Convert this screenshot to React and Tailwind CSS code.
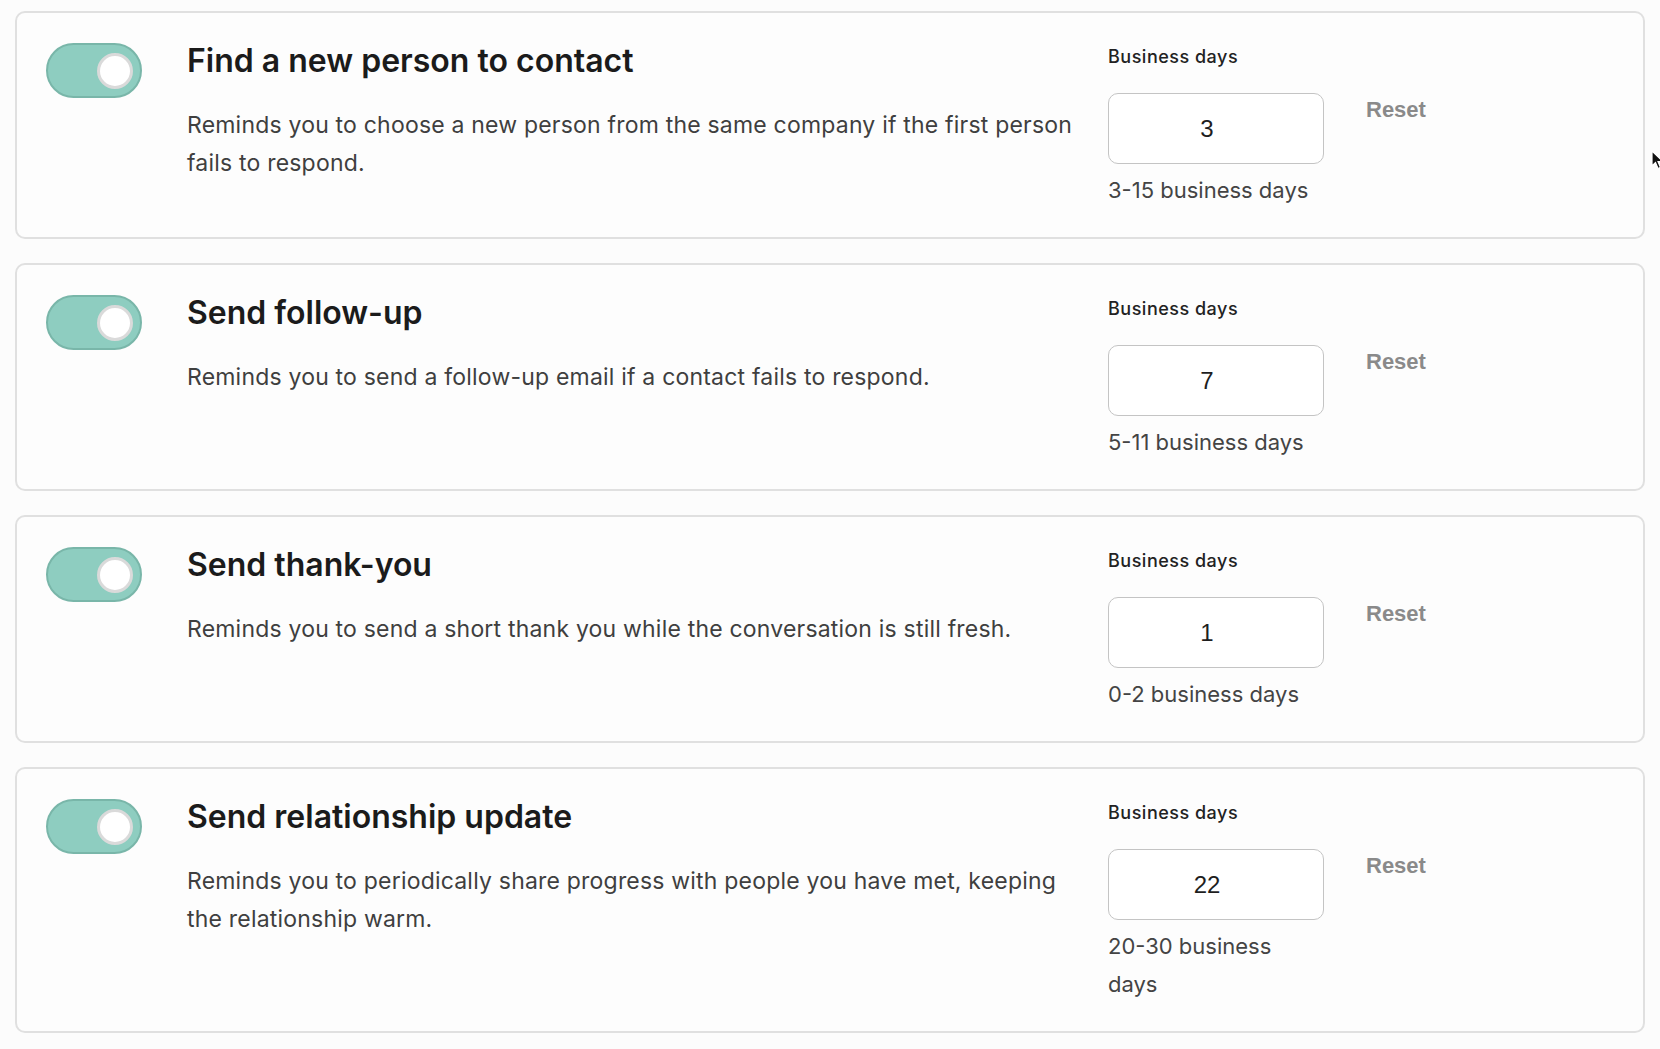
import React from 'react';

const reminders = [
  {
    title: 'Find a new person to contact',
    desc: 'Reminds you to choose a new person from the same company if the first person fails to respond.',
    value: '3',
    range: '3-15 business days',
  },
  {
    title: 'Send follow-up',
    desc: 'Reminds you to send a follow-up email if a contact fails to respond.',
    value: '7',
    range: '5-11 business days',
  },
  {
    title: 'Send thank-you',
    desc: 'Reminds you to send a short thank you while the conversation is still fresh.',
    value: '1',
    range: '0-2 business days',
  },
  {
    title: 'Send relationship update',
    desc: 'Reminds you to periodically share progress with people you have met, keeping the relationship warm.',
    value: '22',
    range: '20-30 business days',
  },
];

function Toggle() {
  return (
    <div className="mt-[2px] w-[96px] h-[55px] shrink-0 rounded-full bg-[#8ecdc0] border-2 border-[#79b6a9] flex items-center justify-end pr-[7px]">
      <div className="w-[36px] h-[36px] rounded-full bg-white border-[3px] border-[#dadada]" />
    </div>
  );
}

function ReminderCard({ item }) {
  return (
    <div className="flex items-start border-2 border-[#e0e0e0] rounded-[10px] bg-[#fdfdfd] pl-[29px] pt-[28px] pb-[28px]">
      <Toggle />
      {/* Title + description */}
      <div className="ml-[45px] w-[895px] shrink-0 font-['Inter',sans-serif]">
        <h2 className="text-[32px] leading-[40px] font-semibold text-[#1b1b1b]">{item.title}</h2>
        <p className="mt-[25px] text-[23px] leading-[38px] text-[#3f3f3f] tracking-[0.2px]">{item.desc}</p>
      </div>
      {/* Business days */}
      <div className="ml-[26px] w-[216px] shrink-0 font-['Inter',sans-serif]">
        <div className="mt-[5px] text-[18px] leading-[22px] font-medium text-[#222] tracking-[0.5px]">
          Business days
        </div>
        <div className="mt-[25px] h-[71px] rounded-[10px] border-[1.5px] border-[#c4c4c4] bg-white flex items-center justify-center pr-[18px] text-[24px] text-[#1e1e1e] font-['Liberation_Sans',sans-serif]">
          {item.value}
        </div>
        <div className="mt-[7px] pr-[10px] text-[22px] leading-[38px] text-[#444]">
          {item.range}
        </div>
      </div>
      <button className="ml-[42px] mt-[56px] text-[22px] leading-[26px] font-bold text-[#8a8a8a] font-['Liberation_Sans',sans-serif]">
        Reset
      </button>
    </div>
  );
}

export default function App() {
  return (
    <div className="relative min-h-screen bg-[#fcfcfc] px-[15px] pt-[11px] pb-[17px] flex flex-col gap-[24px]">
      {reminders.map((r) => (
        <ReminderCard key={r.title} item={r} />
      ))}
      {/* mouse pointer captured in the screenshot */}
      <svg className="absolute left-[1651px] top-[150px]" width="14" height="20" viewBox="0 0 14 20">
        <path d="M1 1 L1 16 L4.5 12.5 L7 18.5 L9.5 17.5 L7 11.5 L12 11.5 Z" fill="#111" stroke="#fff" strokeWidth="1.2" />
      </svg>
    </div>
  );
}
